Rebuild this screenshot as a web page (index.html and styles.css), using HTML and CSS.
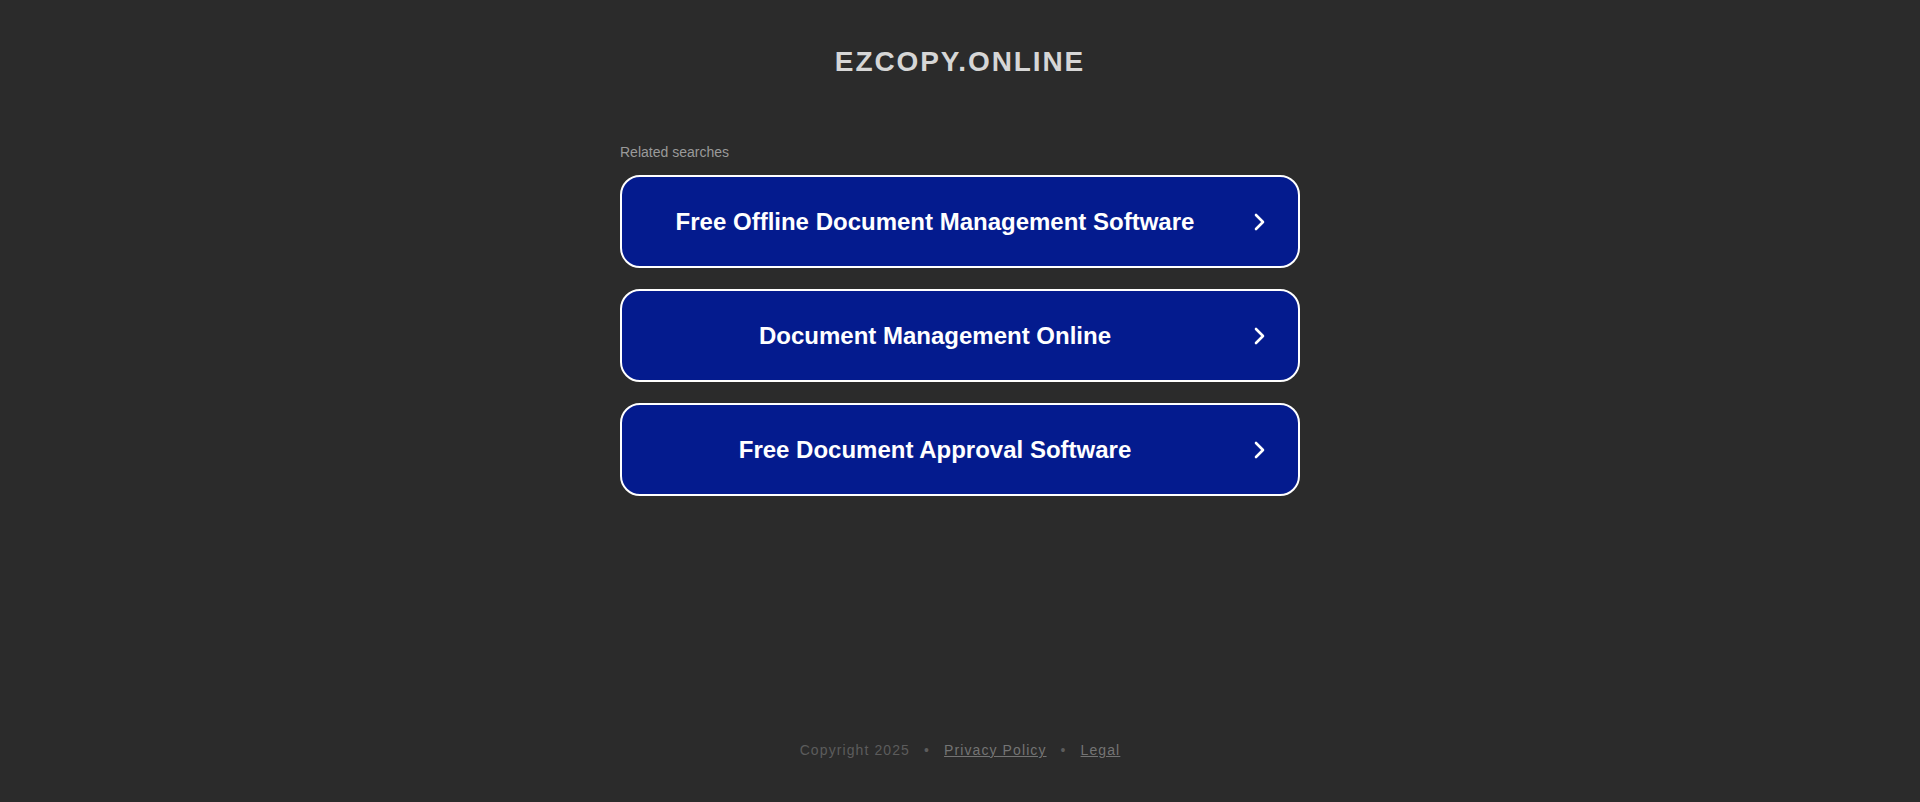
FILE: index.html
```html
<!DOCTYPE html>
<html lang="en">
<head>
<meta charset="utf-8">
<title>ezcopy.online</title>
<link rel="stylesheet" href="styles.css">
</head>
<body>
<div class="page">
  <header class="site-header">
    <h1 class="domain">EZCOPY.ONLINE</h1>
  </header>
  <main class="searches">
    <p class="searches-label">Related searches</p>
    <ul class="search-list">
      <li><a class="search-btn" href="#"><span class="search-text">Free Offline Document Management Software</span><svg class="chevron" viewBox="0 0 24 24" width="24" height="24"><path d="M9 5l7 7-7 7"/></svg></a></li>
      <li><a class="search-btn" href="#"><span class="search-text">Document Management Online</span><svg class="chevron" viewBox="0 0 24 24" width="24" height="24"><path d="M9 5l7 7-7 7"/></svg></a></li>
      <li><a class="search-btn" href="#"><span class="search-text">Free Document Approval Software</span><svg class="chevron" viewBox="0 0 24 24" width="24" height="24"><path d="M9 5l7 7-7 7"/></svg></a></li>
    </ul>
  </main>
  <footer class="site-footer">
    <span class="copy">Copyright 2025</span>
    <span class="dot">•</span>
    <a class="foot-link" href="#">Privacy Policy</a>
    <span class="dot">•</span>
    <a class="foot-link" href="#">Legal</a>
  </footer>
</div>
</body>
</html>
```
FILE: styles.css
```css
html, body {
  margin: 0;
  padding: 0;
  background: #2b2b2b;
  font-family: "Liberation Sans", Arial, sans-serif;
}

.page {
  height: 802px;
  display: flex;
  flex-direction: column;
  align-items: center;
}

.site-header {
  padding-top: 45px;
}

.domain {
  margin: 0;
  font-size: 28px;
  line-height: 34px;
  font-weight: bold;
  letter-spacing: 1.9px;
  color: #d6d6d6;
}

.searches {
  width: 680px;
  margin-top: 65px;
}

.searches-label {
  margin: 0 0 15px;
  font-size: 14px;
  line-height: 16px;
  color: #9a9a9a;
}

.search-list {
  list-style: none;
  margin: 0;
  padding: 0;
  display: flex;
  flex-direction: column;
  gap: 21px;
}

.search-btn {
  box-sizing: border-box;
  height: 93px;
  display: flex;
  align-items: center;
  padding: 0 27px 0 1px;
  background: #041b8e;
  border: 2px solid #ffffff;
  border-radius: 20px;
  color: #ffffff;
  text-decoration: none;
}

.search-text {
  flex: 1;
  text-align: center;
  font-size: 24px;
  font-weight: bold;
}

.chevron {
  flex: none;
  fill: none;
  stroke: #ffffff;
  stroke-width: 2.6;
  stroke-linecap: round;
  stroke-linejoin: round;
}

.site-footer {
  margin-top: auto;
  margin-bottom: 44px;
  font-size: 14px;
  letter-spacing: 1.1px;
  color: #5c5c5c;
  display: flex;
  gap: 14px;
}

.dot {
  color: #5c5c5c;
}

.foot-link {
  color: #747474;
}
```
